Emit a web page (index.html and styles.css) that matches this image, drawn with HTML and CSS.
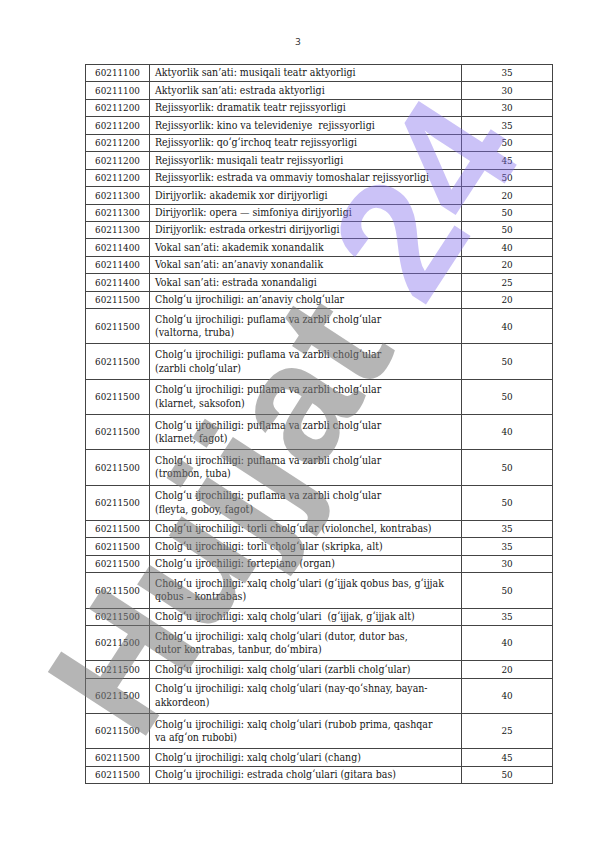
FILE: index.html
```html
<!DOCTYPE html>
<html lang="uz">
<head>
<meta charset="utf-8">
<title>3</title>
<link rel="stylesheet" href="styles.css">
</head>
<body>
<div class="page">
  <div class="page-num">3</div>
  <table class="grid">
    <colgroup><col class="c1"><col class="c2"><col class="c3"></colgroup>
    <tbody>
      <tr><td>60211100</td><td>Aktyorlik san’ati: musiqali teatr aktyorligi</td><td>35</td></tr>
      <tr><td>60211100</td><td>Aktyorlik san’ati: estrada aktyorligi</td><td>30</td></tr>
      <tr><td>60211200</td><td>Rejissyorlik: dramatik teatr rejissyorligi</td><td>30</td></tr>
      <tr><td>60211200</td><td>Rejissyorlik: kino va televideniye&nbsp; rejissyorligi</td><td>35</td></tr>
      <tr><td>60211200</td><td>Rejissyorlik: qo‘g‘irchoq teatr rejissyorligi</td><td>50</td></tr>
      <tr><td>60211200</td><td>Rejissyorlik: musiqali teatr rejissyorligi</td><td>45</td></tr>
      <tr><td>60211200</td><td>Rejissyorlik: estrada va ommaviy tomoshalar rejissyorligi</td><td>50</td></tr>
      <tr><td>60211300</td><td>Dirijyorlik: akademik xor dirijyorligi</td><td>20</td></tr>
      <tr><td>60211300</td><td>Dirijyorlik: opera — simfoniya dirijyorligi</td><td>50</td></tr>
      <tr><td>60211300</td><td>Dirijyorlik: estrada orkestri dirijyorligi</td><td>50</td></tr>
      <tr><td>60211400</td><td>Vokal san’ati: akademik xonandalik</td><td>40</td></tr>
      <tr><td>60211400</td><td>Vokal san’ati: an’anaviy xonandalik</td><td>20</td></tr>
      <tr><td>60211400</td><td>Vokal san’ati: estrada xonandaligi</td><td>25</td></tr>
      <tr><td>60211500</td><td>Cholg‘u ijrochiligi: an’anaviy cholg‘ular</td><td>20</td></tr>
      <tr class="dbl"><td>60211500</td><td>Cholg‘u ijrochiligi: puflama va zarbli cholg‘ular<br>(valtorna, truba)</td><td>40</td></tr>
      <tr class="dbl"><td>60211500</td><td>Cholg‘u ijrochiligi: puflama va zarbli cholg‘ular<br>(zarbli cholg‘ular)</td><td>50</td></tr>
      <tr class="dbl"><td>60211500</td><td>Cholg‘u ijrochiligi: puflama va zarbli cholg‘ular<br>(klarnet, saksofon)</td><td>50</td></tr>
      <tr class="dbl"><td>60211500</td><td>Cholg‘u ijrochiligi: puflama va zarbli cholg‘ular<br>(klarnet, fagot)</td><td>40</td></tr>
      <tr class="dbl"><td>60211500</td><td>Cholg‘u ijrochiligi: puflama va zarbli cholg‘ular<br>(trombon, tuba)</td><td>50</td></tr>
      <tr class="dbl"><td>60211500</td><td>Cholg‘u ijrochiligi: puflama va zarbli cholg‘ular<br>(fleyta, goboy, fagot)</td><td>50</td></tr>
      <tr><td>60211500</td><td>Cholg‘u ijrochiligi: torli cholg‘ular (violonchel, kontrabas)</td><td>35</td></tr>
      <tr><td>60211500</td><td>Cholg‘u ijrochiligi: torli cholg‘ular (skripka, alt)</td><td>35</td></tr>
      <tr><td>60211500</td><td>Cholg‘u ijrochiligi: fortepiano (organ)</td><td>30</td></tr>
      <tr class="dbl"><td>60211500</td><td>Cholg‘u ijrochiligi: xalq cholg‘ulari (g‘ijjak qobus bas, g‘ijjak<br>qobus – kontrabas)</td><td>50</td></tr>
      <tr><td>60211500</td><td>Cholg‘u ijrochiligi: xalq cholg‘ulari&nbsp; (g‘ijjak, g‘ijjak alt)</td><td>35</td></tr>
      <tr class="dbl"><td>60211500</td><td>Cholg‘u ijrochiligi: xalq cholg‘ulari (dutor, dutor bas,<br>dutor kontrabas, tanbur, do‘mbira)</td><td>40</td></tr>
      <tr><td>60211500</td><td>Cholg‘u ijrochiligi: xalq cholg‘ulari (zarbli cholg‘ular)</td><td>20</td></tr>
      <tr class="dbl"><td>60211500</td><td>Cholg‘u ijrochiligi: xalq cholg‘ulari (nay-qo‘shnay, bayan-<br>akkordeon)</td><td>40</td></tr>
      <tr class="dbl"><td>60211500</td><td>Cholg‘u ijrochiligi: xalq cholg‘ulari (rubob prima, qashqar<br>va afg‘on rubobi)</td><td>25</td></tr>
      <tr><td>60211500</td><td>Cholg‘u ijrochiligi: xalq cholg‘ulari (chang)</td><td>45</td></tr>
      <tr><td>60211500</td><td>Cholg‘u ijrochiligi: estrada cholg‘ulari (gitara bas)</td><td>50</td></tr>
    </tbody>
  </table>
  <div class="watermark" aria-hidden="true">
    <div class="wm-text"><span class="wm-gray">Hujjat</span> <span class="wm-purple">24</span></div>
  </div>
</div>
</body>
</html>
```

FILE: styles.css
```css
* { box-sizing: border-box; }
html, body { margin: 0; padding: 0; background: #fff; }
.page {
  position: relative;
  width: 596px;
  height: 842px;
  overflow: hidden;
  padding-top: 36px;
}
.page-num {
  text-align: center;
  font-family: "Open Sans", "Liberation Sans", sans-serif;
  font-size: 9.5px;
  line-height: 12px;
  color: #222;
  margin-bottom: 16px;
}
.grid {
  margin-left: 85px;
  width: 467px;
  border-collapse: collapse;
  table-layout: fixed;
  color: #161616;
}
.grid td {
  font-family: "DejaVu Serif Condensed", "DejaVu Serif", serif;
  font-stretch: condensed;
  font-size: 10.5px;
  border: 1px solid #444;
  height: 17.45px;
  padding: 0 5px;
  line-height: 13.5px;
  vertical-align: middle;
  white-space: nowrap;
}
.c1 { width: 64px; }
.c2 { width: 312px; }
.c3 { width: 91px; }
.grid td:first-child, .grid td:last-child { text-align: center; padding: 0; font-size: 9.8px; }
.grid tr.dbl td { height: 35.3px; }
.watermark {
  position: absolute;
  inset: 0;
  display: flex;
  align-items: center;
  justify-content: center;
  pointer-events: none;
}
.wm-text {
  transform: translate(-15px, -5px) rotate(-57deg);
  font-family: "Liberation Sans", Arial, sans-serif;
  font-weight: 700;
  font-size: 170px;
  line-height: 1;
  white-space: nowrap;
}
.wm-gray { color: rgba(120, 120, 120, 0.55); }
.wm-purple { color: rgba(130, 110, 235, 0.42); }
```
